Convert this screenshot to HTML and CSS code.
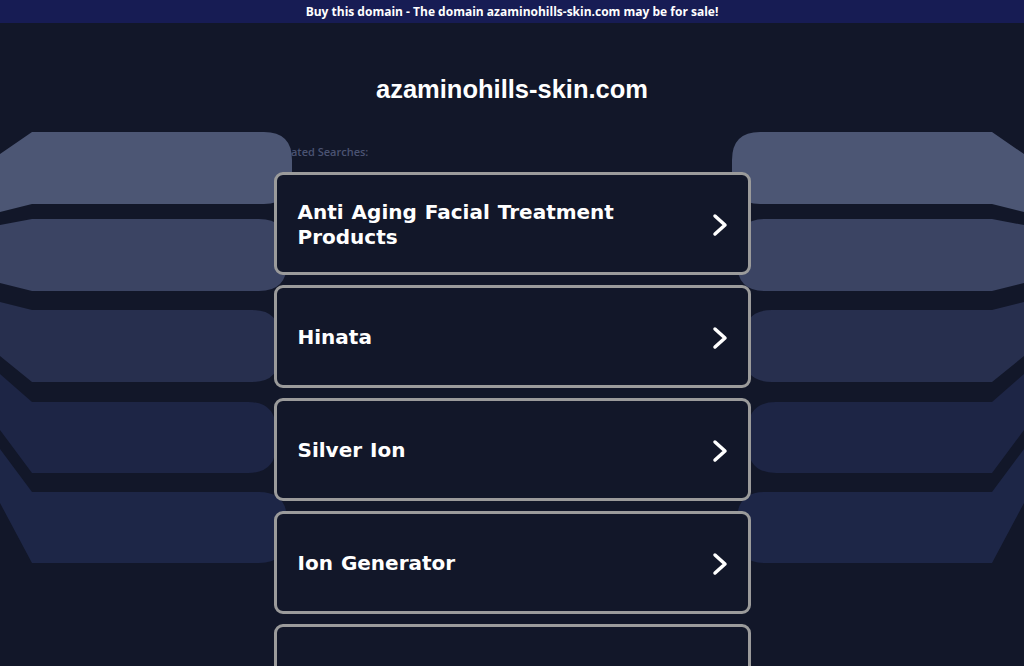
FILE: index.html
```html
<!DOCTYPE html>
<html>
<head>
    <title>azaminohills-skin.com</title>
    <link rel="stylesheet" href="styles.css">
</head>
<body>
    <div class="sale-bar">Buy this domain - The domain azaminohills-skin.com may be for sale!</div>

    <!-- decorative stripes on both sides of the list -->
    <svg class="bands" width="1024" height="600" viewBox="0 0 1024 600">
        <g id="bands-left">
            <path fill="#4c5674" d="M0,154 L32,132 L264,132 Q292,132 292,160 L292,176 Q292,204 264,204 L32,204 L0,212 Z"/>
            <path fill="#3b4463" d="M0,225 L32,219 L259,219 Q287,219 287,247 L287,263 Q287,291 259,291 L32,291 L0,283 Z"/>
            <path fill="#272f4e" d="M0,302 L32,310 L252,310 Q280,310 280,338 L280,354 Q280,382 252,382 L32,382 L0,356 Z"/>
            <path fill="#1d2545" d="M0,374 L32,402 L248,402 Q276,402 276,430 L276,445 Q276,473 248,473 L32,473 L0,430 Z"/>
            <path fill="#1d2647" d="M0,449 L32,492 L259,492 Q287,492 287,520 L287,535 Q287,563 259,563 L32,563 L0,503 Z"/>
        </g>
        <use href="#bands-left" transform="translate(1024,0) scale(-1,1)"/>
    </svg>

    <div class="page">
        <h1 class="domain">azaminohills-skin.com</h1>

        <div class="related-title">Related Searches:</div>

        <div class="result-list">
            <a class="result" href="#">
                <span class="result-text">Anti Aging Facial Treatment Products</span>
                <svg class="chevron" width="16" height="24" viewBox="0 0 16 24"><path d="M3,3 L13,12 L3,21"/></svg>
            </a>
            <a class="result" href="#">
                <span class="result-text">Hinata</span>
                <svg class="chevron" width="16" height="24" viewBox="0 0 16 24"><path d="M3,3 L13,12 L3,21"/></svg>
            </a>
            <a class="result" href="#">
                <span class="result-text">Silver Ion</span>
                <svg class="chevron" width="16" height="24" viewBox="0 0 16 24"><path d="M3,3 L13,12 L3,21"/></svg>
            </a>
            <a class="result" href="#">
                <span class="result-text">Ion Generator</span>
                <svg class="chevron" width="16" height="24" viewBox="0 0 16 24"><path d="M3,3 L13,12 L3,21"/></svg>
            </a>
            <a class="result" href="#">
                <span class="result-text">Skin Care</span>
                <svg class="chevron" width="16" height="24" viewBox="0 0 16 24"><path d="M3,3 L13,12 L3,21"/></svg>
            </a>
        </div>
    </div>
</body>
</html>
```

FILE: styles.css
```css
body {
    margin: 0;
    height: 100vh;
    overflow: hidden;
    background-color: #121729;
    font-family: "DejaVu Sans", Verdana, sans-serif;
}
.sale-bar {
    height: 23px;
    line-height: 23px;
    background-color: #171c54;
    color: white;
    text-align: center;
    font-family: "Open Sans", sans-serif;
    font-size: 12px;
    font-weight: 700;
}
.bands {
    position: absolute;
    top: 0;
    left: 0;
}
.page {
    width: 477px;
    margin: 0 auto;
}
.domain {
    margin: 51px 0 0;
    font-family: "Liberation Sans", Arial, sans-serif;
    font-size: 25.5px;
    font-weight: bold;
    line-height: 30px;
    color: white;
    text-align: center;
}
/* sits under the stripes, the cards sit above them */
.related-title {
    margin-top: 41px;
    padding-left: 1px;
    font-family: "Open Sans", sans-serif;
    font-size: 11px;
    font-weight: 600;
    line-height: 14px;
    color: #4b5372;
}
.result-list {
    display: flex;
    flex-direction: column;
    gap: 10px;
    margin-top: 13px;
}
.result {
    position: relative;
    display: flex;
    align-items: center;
    justify-content: space-between;
    box-sizing: border-box;
    height: 103px;
    padding: 2px 20px 0 21px;
    border: 3px solid #9b9b9b;
    border-radius: 9px;
    background-color: #121729;
    color: white;
    text-decoration: none;
    font-size: 20px;
    font-weight: bold;
    line-height: 25px;
}
.result-text {
    padding-right: 20px;
    word-spacing: 1px;
}
.chevron {
    flex-shrink: 0;
}
.chevron path {
    fill: none;
    stroke: white;
    stroke-width: 3.5;
    stroke-linecap: round;
    stroke-linejoin: round;
}
```
